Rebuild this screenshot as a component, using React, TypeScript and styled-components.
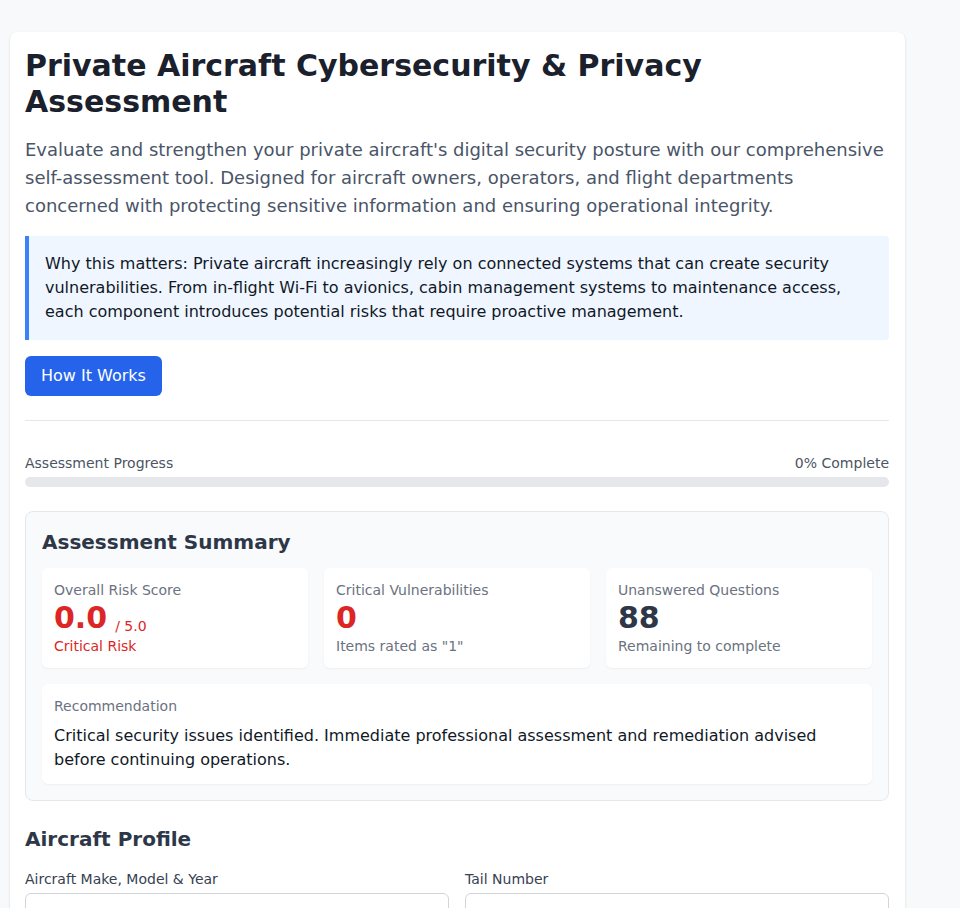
import React from 'react';
import styled, { createGlobalStyle } from 'styled-components';

const GlobalStyle = createGlobalStyle`
	* {
		box-sizing: border-box;
	}
	body {
		margin: 0;
		background: #f8f9fa;
		font-family: 'DejaVu Sans', 'Liberation Sans', sans-serif;
		color: #111827;
	}
`;

const Page = styled.div`
	padding: 32px 0 32px 10px;
`;

const Card = styled.div`
	width: 895px;
	background: #ffffff;
	border-radius: 8px;
	box-shadow: 0 1px 3px rgba(0, 0, 0, 0.1), 0 1px 2px rgba(0, 0, 0, 0.06);
	padding: 16px 16px 24px 15px;
`;

const Title = styled.h1`
	margin: 0;
	font-size: 30px;
	line-height: 36px;
	font-weight: 700;
	color: #1a202c;
`;

const Intro = styled.p`
	margin: 16px 0 0;
	font-size: 18px;
	line-height: 28px;
	color: #4a5568;
`;

const Callout = styled.div`
	margin-top: 16px;
	background: #eff6ff;
	border-left: 4px solid #3b82f6;
	border-radius: 0 4px 4px 0;
	padding: 16px;
	font-size: 16px;
	line-height: 24px;
	color: #111827;
`;

const PrimaryButton = styled.button`
	margin-top: 16px;
	display: inline-block;
	background: #2563eb;
	color: #ffffff;
	border: none;
	border-radius: 6px;
	padding: 8px 16px;
	font-family: inherit;
	font-size: 16px;
	line-height: 24px;
	cursor: pointer;
`;

const Divider = styled.hr`
	border: none;
	border-top: 1px solid #e5e7eb;
	margin: 24px 0 32px;
`;

const ProgressHeader = styled.div`
	display: flex;
	justify-content: space-between;
	font-size: 14px;
	line-height: 20px;
	color: #4b5563;
	margin-bottom: 4px;
`;

const Track = styled.div`
	height: 10px;
	border-radius: 5px;
	background: #e5e7eb;
	overflow: hidden;
`;

const Fill = styled.div`
	height: 100%;
	background: #2563eb;
`;

const Summary = styled.section`
	margin-top: 24px;
	background: #f9fafb;
	border: 1px solid #e5e7eb;
	border-radius: 8px;
	padding: 16px;
`;

const SectionTitle = styled.h2<{ $spacing?: string }>`
	margin: ${(p) => p.$spacing || '0'};
	font-size: 20px;
	line-height: 28px;
	font-weight: 700;
	color: #2d3748;
`;

const StatGrid = styled.div`
	display: grid;
	grid-template-columns: repeat(3, 1fr);
	gap: 16px;
`;

const Tile = styled.div`
	background: #ffffff;
	border-radius: 6px;
	box-shadow: 0 1px 2px rgba(0, 0, 0, 0.05);
	padding: 12px;
`;

const TileLabel = styled.div`
	font-size: 14px;
	line-height: 20px;
	color: #6b7280;
`;

const StatValue = styled.div<{ $danger?: boolean }>`
	display: flex;
	align-items: flex-end;
	font-size: 30px;
	line-height: 36px;
	font-weight: 700;
	color: ${(p) => (p.$danger ? '#dc2626' : '#2d3748')};
`;

const OutOf = styled.span`
	font-size: 14px;
	line-height: 20px;
	font-weight: 400;
	margin-left: 8px;
`;

const StatNote = styled.div<{ $danger?: boolean }>`
	font-size: 14px;
	line-height: 20px;
	color: ${(p) => (p.$danger ? '#dc2626' : '#6b7280')};
`;

const RecommendTile = styled(Tile)`
	margin-top: 16px;
`;

const RecommendText = styled.p`
	margin: 8px 0 0;
	font-size: 16px;
	line-height: 24px;
	color: #111827;
`;

const FormGrid = styled.div`
	display: grid;
	grid-template-columns: 1fr 1fr;
	gap: 16px;
`;

const Field = styled.label`
	display: flex;
	flex-direction: column;
	gap: 4px;
	font-size: 14px;
	line-height: 20px;
	color: #374151;
`;

const TextInput = styled.input`
	height: 42px;
	border: 1px solid #d1d5db;
	border-radius: 6px;
	padding: 8px 12px;
	font-family: inherit;
	font-size: 16px;
	background: #ffffff;
`;

const stats = [
	{ label: 'Critical Vulnerabilities', value: '0', note: 'Items rated as "1"', danger: true },
	{ label: 'Unanswered Questions', value: '88', note: 'Remaining to complete', danger: false },
];

export default function App() {
	const progress = 0;

	return (
		<>
			<GlobalStyle />
			<Page>
				<Card>
					<Title>Private Aircraft Cybersecurity &amp; Privacy Assessment</Title>
					<Intro>
						Evaluate and strengthen your private aircraft's digital security posture with our
						comprehensive self-assessment tool. Designed for aircraft owners, operators, and flight
						departments concerned with protecting sensitive information and ensuring operational
						integrity.
					</Intro>
					<Callout>
						Why this matters: Private aircraft increasingly rely on connected systems that can create
						security vulnerabilities. From in-flight Wi-Fi to avionics, cabin management systems to
						maintenance access, each component introduces potential risks that require proactive
						management.
					</Callout>
					<PrimaryButton>How It Works</PrimaryButton>
					<Divider />

					<ProgressHeader>
						<span>Assessment Progress</span>
						<span>{progress}% Complete</span>
					</ProgressHeader>
					<Track>
						<Fill style={{ width: `${progress}%` }} />
					</Track>

					<Summary>
						<SectionTitle $spacing="0 0 12px">Assessment Summary</SectionTitle>
						<StatGrid>
							<Tile>
								<TileLabel>Overall Risk Score</TileLabel>
								<StatValue $danger>
									0.0<OutOf>/ 5.0</OutOf>
								</StatValue>
								<StatNote $danger>Critical Risk</StatNote>
							</Tile>
							{stats.map((s) => (
								<Tile key={s.label}>
									<TileLabel>{s.label}</TileLabel>
									<StatValue $danger={s.danger}>{s.value}</StatValue>
									<StatNote>{s.note}</StatNote>
								</Tile>
							))}
						</StatGrid>
						<RecommendTile>
							<TileLabel>Recommendation</TileLabel>
							<RecommendText>
								Critical security issues identified. Immediate professional assessment and
								remediation advised before continuing operations.
							</RecommendText>
						</RecommendTile>
					</Summary>

					<SectionTitle $spacing="24px 0 16px">Aircraft Profile</SectionTitle>
					<FormGrid>
						<Field>
							Aircraft Make, Model &amp; Year
							<TextInput type="text" />
						</Field>
						<Field>
							Tail Number
							<TextInput type="text" />
						</Field>
					</FormGrid>
				</Card>
			</Page>
		</>
	);
}
